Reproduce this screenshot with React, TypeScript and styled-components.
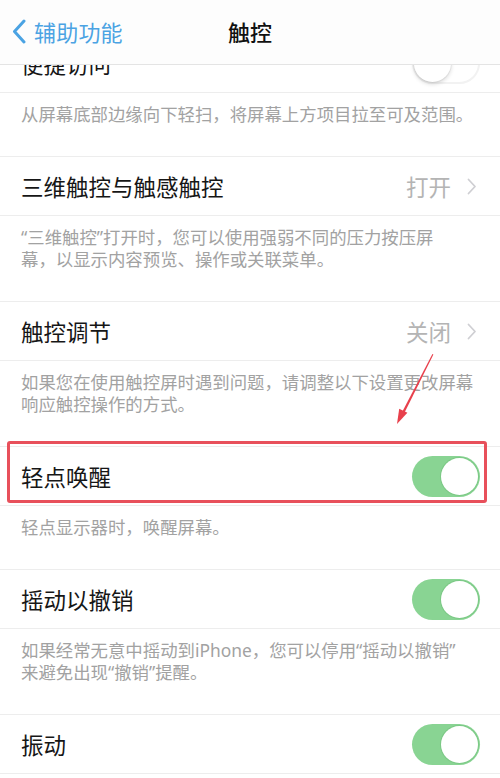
import React from 'react'
import styled, { createGlobalStyle } from 'styled-components'

const GlobalStyle = createGlobalStyle`
  html, body {
    margin: 0;
    padding: 0;
    background: #ffffff;
  }
  body {
    font-family: "Noto Sans CJK SC", "Noto Sans", sans-serif;
    -webkit-font-smoothing: antialiased;
  }
`

type RowData = {
  label: string
  value?: string
  toggle?: 'on' | 'off'
  highlight?: boolean
  footer: string[]
}

const rows: RowData[] = [
  { label: '便捷访问', toggle: 'off', footer: ['从屏幕底部边缘向下轻扫，将屏幕上方项目拉至可及范围。'] },
  {
    label: '三维触控与触感触控',
    value: '打开',
    footer: ['“三维触控”打开时，您可以使用强弱不同的压力按压屏', '幕，以显示内容预览、操作或关联菜单。'],
  },
  {
    label: '触控调节',
    value: '关闭',
    footer: ['如果您在使用触控屏时遇到问题，请调整以下设置更改屏幕', '响应触控操作的方式。'],
  },
  { label: '轻点唤醒', toggle: 'on', highlight: true, footer: ['轻点显示器时，唤醒屏幕。'] },
  {
    label: '摇动以撤销',
    toggle: 'on',
    footer: ['如果经常无意中摇动到iPhone，您可以停用“摇动以撤销”', '来避免出现“撤销”提醒。'],
  },
  { label: '振动', toggle: 'on', footer: [] },
]

const App = () => {
  return (
    <>
      <GlobalStyle />
      <Page>
        <NavBar>
          <Back>
            <svg width="14" height="25" viewBox="0 0 14 25">
              <path d="M12 2 L2.5 12.5 L12 23" fill="none" stroke="#4ba3e3" strokeWidth="3" strokeLinecap="round" strokeLinejoin="round" />
            </svg>
            <span>辅助功能</span>
          </Back>
          <Title>触控</Title>
          <span />
        </NavBar>

        <ScrollView>
          <List>
            {rows.map((r) => (
              <React.Fragment key={r.label}>
                <Row>
                  <Label>{r.label}</Label>
                  {r.value && (
                    <Detail>
                      <Value>{r.value}</Value>
                      <svg width="10" height="17" viewBox="0 0 10 17">
                        <path d="M1.5 1.5 L8 8.5 L1.5 15.5" fill="none" stroke="#cfcfd3" strokeWidth="1.8" strokeLinecap="round" strokeLinejoin="round" />
                      </svg>
                    </Detail>
                  )}
                  {r.toggle && (
                    <Switch $on={r.toggle === 'on'}>
                      <Knob $on={r.toggle === 'on'} />
                    </Switch>
                  )}
                  {r.highlight && <Highlight />}
                </Row>
                {r.footer.length > 0 && (
                  <Footer>
                    {r.footer.map((line, i) => (
                      <div key={i}>{line}</div>
                    ))}
                  </Footer>
                )}
              </React.Fragment>
            ))}
          </List>
        </ScrollView>

        <Arrow width="50" height="85" viewBox="0 0 50 85">
          <polygon points="42.4,9 43.4,9.4 14.6,67.4 12.4,66.4" fill="#e8404c" />
          <polygon points="7,79 9.2,63.8 17.4,67.8" fill="#e8404c" />
        </Arrow>
      </Page>
    </>
  )
}

export default App

const Page = styled.div`
  position: relative;
  width: 500px;
  height: 778px;
  overflow: hidden;
  display: flex;
  flex-direction: column;
  background: #ffffff;
`

const NavBar = styled.div`
  flex-shrink: 0;
  height: 65px;
  box-sizing: border-box;
  display: grid;
  grid-template-columns: 1fr auto 1fr;
  align-items: center;
  padding-bottom: 2px;
  background: #fdfdfd;
  border-bottom: 1px solid #e4e4e4;
  position: relative;
  z-index: 2;
`

const Back = styled.div`
  display: flex;
  align-items: center;
  gap: 8px;
  padding-left: 12px;
  color: #4ba3e3;
  font-size: 22px;
  letter-spacing: 0.2px;
`

const Title = styled.div`
  font-size: 22px;
  font-weight: 500;
  color: #111111;
`

const ScrollView = styled.div`
  flex: 1;
  overflow: hidden;
`

/* scrolled down by 32px, so the first row sits under the nav bar */
const List = styled.div`
  margin-top: -32px;
`

const Row = styled.div`
  position: relative;
  height: 60px;
  box-sizing: border-box;
  display: flex;
  align-items: center;
  justify-content: space-between;
  padding: 0 20px 0 21px;
  background: #ffffff;
  border-top: 1px solid #ededed;
  border-bottom: 1px solid #ededed;
`

const Label = styled.div`
  font-size: 22.5px;
  color: #161616;
`

const Detail = styled.div`
  display: flex;
  align-items: center;
  gap: 16px;
  padding-right: 3px;
`

const Value = styled.div`
  font-size: 22.5px;
  color: #b4b4b4;
`

const Switch = styled.div<{ $on: boolean }>`
  width: 68px;
  height: 41px;
  box-sizing: border-box;
  border-radius: 21px;
  padding: 2px;
  display: flex;
  justify-content: ${(p) => (p.$on ? 'flex-end' : 'flex-start')};
  align-items: center;
  background: ${(p) => (p.$on ? '#89d493' : '#ffffff')};
  box-shadow: ${(p) => (p.$on ? 'none' : 'inset 0 0 0 2px #f2f2f2')};
`

const Knob = styled.div<{ $on: boolean }>`
  width: 37px;
  height: 37px;
  border-radius: 50%;
  background: #ffffff;
  box-shadow: ${(p) =>
    p.$on ? '0 0 0 1px rgba(110, 190, 120, 0.5)' : '0 2px 4px rgba(0, 0, 0, 0.16), 0 0 0 1px rgba(0, 0, 0, 0.04)'};
`

const Highlight = styled.div`
  position: absolute;
  top: -6px;
  left: 7px;
  right: 13px;
  bottom: 2px;
  border: 3px solid #e8505b;
  border-radius: 3px;
  pointer-events: none;
`

const Footer = styled.div`
  padding: 10px 21px 31px;
  font-family: "Noto Sans", "Noto Sans CJK SC", sans-serif;
  font-size: 17.4px;
  line-height: 22px;
  color: #a2a2a2;
  white-space: nowrap;
  background: #ffffff;
`

const Arrow = styled.svg`
  position: absolute;
  left: 390px;
  top: 345px;
  z-index: 3;
`
